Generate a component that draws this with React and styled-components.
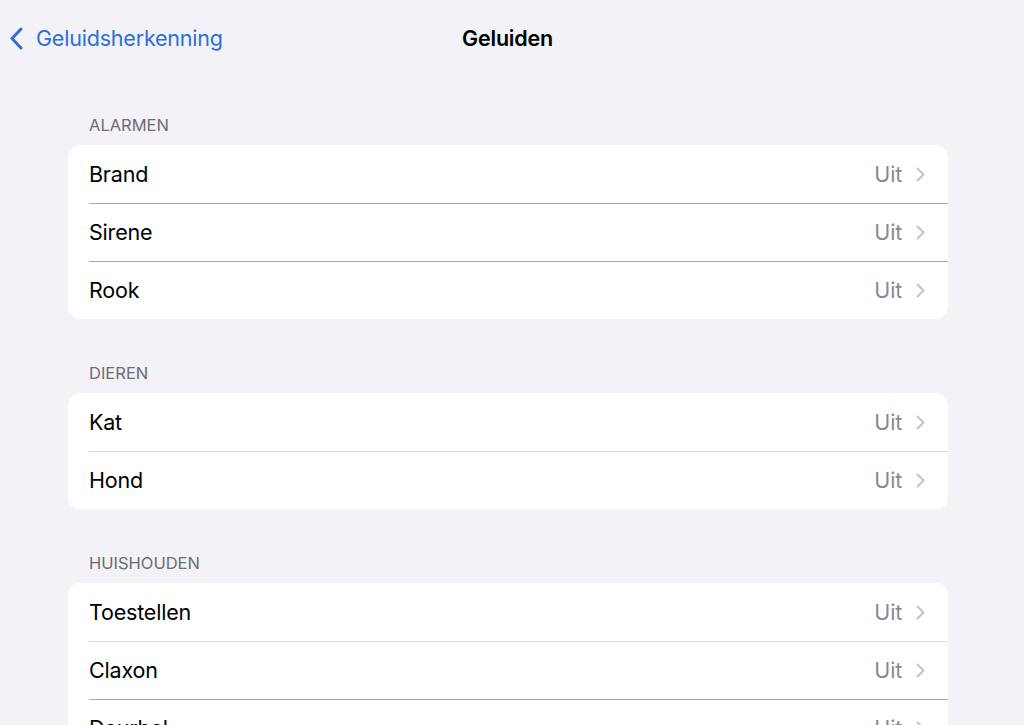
import React from 'react';
import styled, { createGlobalStyle } from 'styled-components';

const GlobalStyle = createGlobalStyle`
  html, body {
    margin: 0;
    padding: 0;
    background: #f2f2f7;
  }
  body {
    font-family: Inter, "Liberation Sans", sans-serif;
    -webkit-font-smoothing: antialiased;
  }
`;

const Page = styled.div`
  width: 1024px;
  height: 725px;
  overflow: hidden;
  background: #f2f2f7;
`;

const NavBar = styled.div`
  display: grid;
  grid-template-columns: 1fr auto 1fr;
  align-items: center;
  height: 76px;
  padding: 0 9px;
`;

const BackLink = styled.a`
  display: flex;
  align-items: center;
  gap: 13px;
  color: #2c6fd9;
  font-size: 21.5px;
  letter-spacing: -0.2px;
  text-decoration: none;
  cursor: pointer;
`;

const Title = styled.div`
  margin-right: 9px;
  font-size: 21.5px;
  font-weight: 600;
  color: #000;
  letter-spacing: -0.2px;
`;

const Content = styled.div`
  width: 880px;
  margin-left: 68px;
  padding-top: 41px;
`;

const Section = styled.section`
  & + & {
    margin-top: 46px;
  }
`;

const SectionHeader = styled.div`
  padding: 0 21px 12px;
  font-size: 16.5px;
  line-height: 16px;
  color: #6d6d72;
  text-transform: uppercase;
`;

const Card = styled.div`
  background: #fff;
  border-radius: 12px;
  overflow: hidden;
`;

const Row = styled.div`
  position: relative;
  display: flex;
  align-items: center;
  height: 58px;
  padding: 0 23px 0 21px;
  font-size: 21.5px;
  letter-spacing: -0.2px;
  color: #000;

  &:not(:first-child)::before {
    content: '';
    position: absolute;
    top: 0;
    left: 21px;
    right: 0;
    height: 1px;
    background: ${(p) => (p.$strong ? '#a9a9ad' : '#dcdce0')};
  }
`;

const Label = styled.span`
  flex: 1;
`;

const Value = styled.span`
  color: #8a8a8e;
  margin-right: 14px;
`;

const Chevron = () => (
  <svg width="9" height="15" viewBox="0 0 9 15" fill="none">
    <path d="M1.5 1.5L7.5 7.5L1.5 13.5" stroke="#c4c4c7" strokeWidth="2" strokeLinecap="round" strokeLinejoin="round" />
  </svg>
);

const BackChevron = () => (
  <svg width="14" height="23" viewBox="0 0 14 23" fill="none">
    <path d="M12 2L3 11.5L12 21" stroke="#2c6fd9" strokeWidth="3" strokeLinecap="round" strokeLinejoin="round" />
  </svg>
);

const sections = [
  { title: 'Alarmen', rows: [['Brand'], ['Sirene', true], ['Rook', true]] },
  { title: 'Dieren', rows: [['Kat'], ['Hond']] },
  { title: 'Huishouden', rows: [['Toestellen'], ['Claxon'], ['Deurbel', true]] },
];

export default function App() {
  return (
    <Page>
      <GlobalStyle />
      <NavBar>
        <BackLink>
          <BackChevron />
          Geluidsherkenning
        </BackLink>
        <Title>Geluiden</Title>
        <div />
      </NavBar>
      <Content>
        {sections.map((s) => (
          <Section key={s.title}>
            <SectionHeader>{s.title}</SectionHeader>
            <Card>
              {s.rows.map(([name, strong]) => (
                <Row key={name} $strong={strong}>
                  <Label>{name}</Label>
                  <Value>Uit</Value>
                  <Chevron />
                </Row>
              ))}
            </Card>
          </Section>
        ))}
      </Content>
    </Page>
  );
}
